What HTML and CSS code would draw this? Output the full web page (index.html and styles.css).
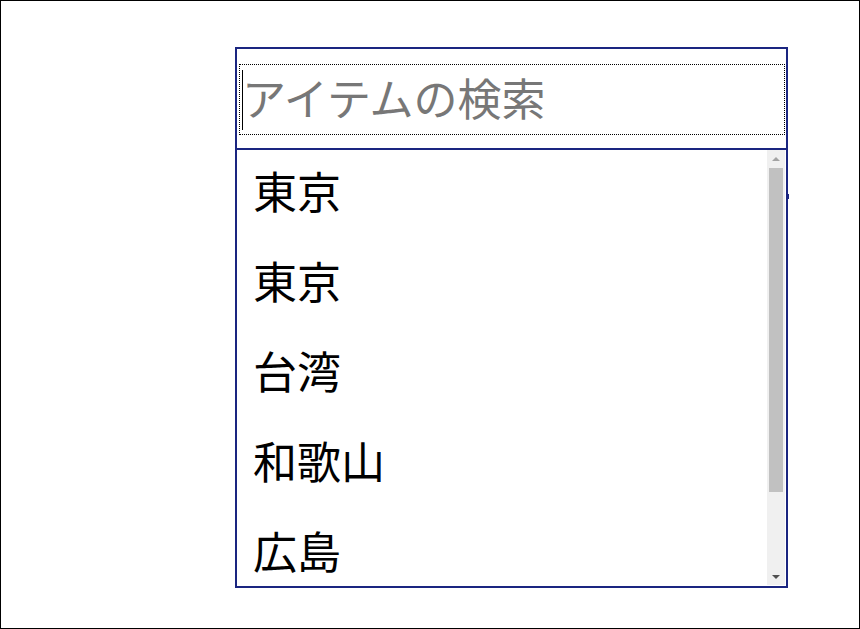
FILE: index.html
```html
<!DOCTYPE html>
<html lang="ja">
<head>
<meta charset="utf-8">
<link rel="stylesheet" href="styles.css">
</head>
<body>
<div class="frame">
  <div class="combo">
    <div class="search">
      <div class="search-box"><span class="caret"></span><span class="placeholder">アイテムの検索</span></div>
    </div>
    <div class="list-wrap">
      <ul class="list">
        <li class="item">東京</li>
        <li class="item">東京</li>
        <li class="item">台湾</li>
        <li class="item">和歌山</li>
        <li class="item">広島</li>
      </ul>
      <div class="scrollbar">
        <div class="arrow up"></div>
        <div class="track"><div class="thumb"></div></div>
        <div class="arrow down"></div>
      </div>
      <span class="tick"></span>
    </div>
  </div>
</div>
</body>
</html>
```
FILE: styles.css
```css
* { box-sizing: border-box; }
html, body { margin: 0; padding: 0; background: #fff; }
.frame {
  width: 860px;
  height: 629px;
  border: 1px solid #000;
  padding: 46px 0 0 234px;
  font-family: "Noto Sans CJK JP", "Noto Sans", sans-serif;
}
.combo {
  width: 553px;
  height: 541px;
  border: 2px solid #1a2580;
  display: flex;
  flex-direction: column;
}
.search {
  height: 101px;
  flex: none;
  padding: 15px 1px 0 2px;
  border-bottom: 2px solid #1a2580;
}
.search-box {
  height: 71px;
  border: 1px dotted #000;
  display: flex;
  align-items: center;
  padding-left: 2px;
}
.caret {
  width: 1px;
  height: 60px;
  background: #000;
}
.placeholder {
  font-size: 44px;
  line-height: 1;
  color: #777;
  margin-left: -1px;
  margin-top: -6px;
}
.list-wrap {
  flex: 1;
  display: flex;
  position: relative;
  min-height: 0;
}
.list {
  flex: 1;
  margin: 0;
  padding: 0;
  list-style: none;
  overflow: hidden;
}
.item {
  height: 90px;
  display: flex;
  align-items: center;
  padding-left: 16px;
  padding-bottom: 10px;
  font-size: 44px;
  line-height: 1;
  color: #000;
}
.scrollbar {
  width: 18px;
  margin-right: 1px;
  margin-bottom: 1px;
  background: #f0f0f0;
  display: flex;
  flex-direction: column;
}
.arrow {
  height: 17px;
  display: flex;
  align-items: center;
  justify-content: center;
}
.arrow::before {
  content: "";
  width: 0;
  height: 0;
  border-left: 4px solid transparent;
  border-right: 4px solid transparent;
}
.arrow.up::before { border-bottom: 4px solid #a3a3a3; }
.arrow.down::before { border-top: 4px solid #505050; }
.track {
  flex: 1;
  padding: 1px 2px 0 2px;
}
.thumb {
  height: 324px;
  background: #c1c1c1;
}
.tick {
  position: absolute;
  right: -3px;
  top: 44px;
  width: 2px;
  height: 5px;
  background: #1a2580;
}
```
